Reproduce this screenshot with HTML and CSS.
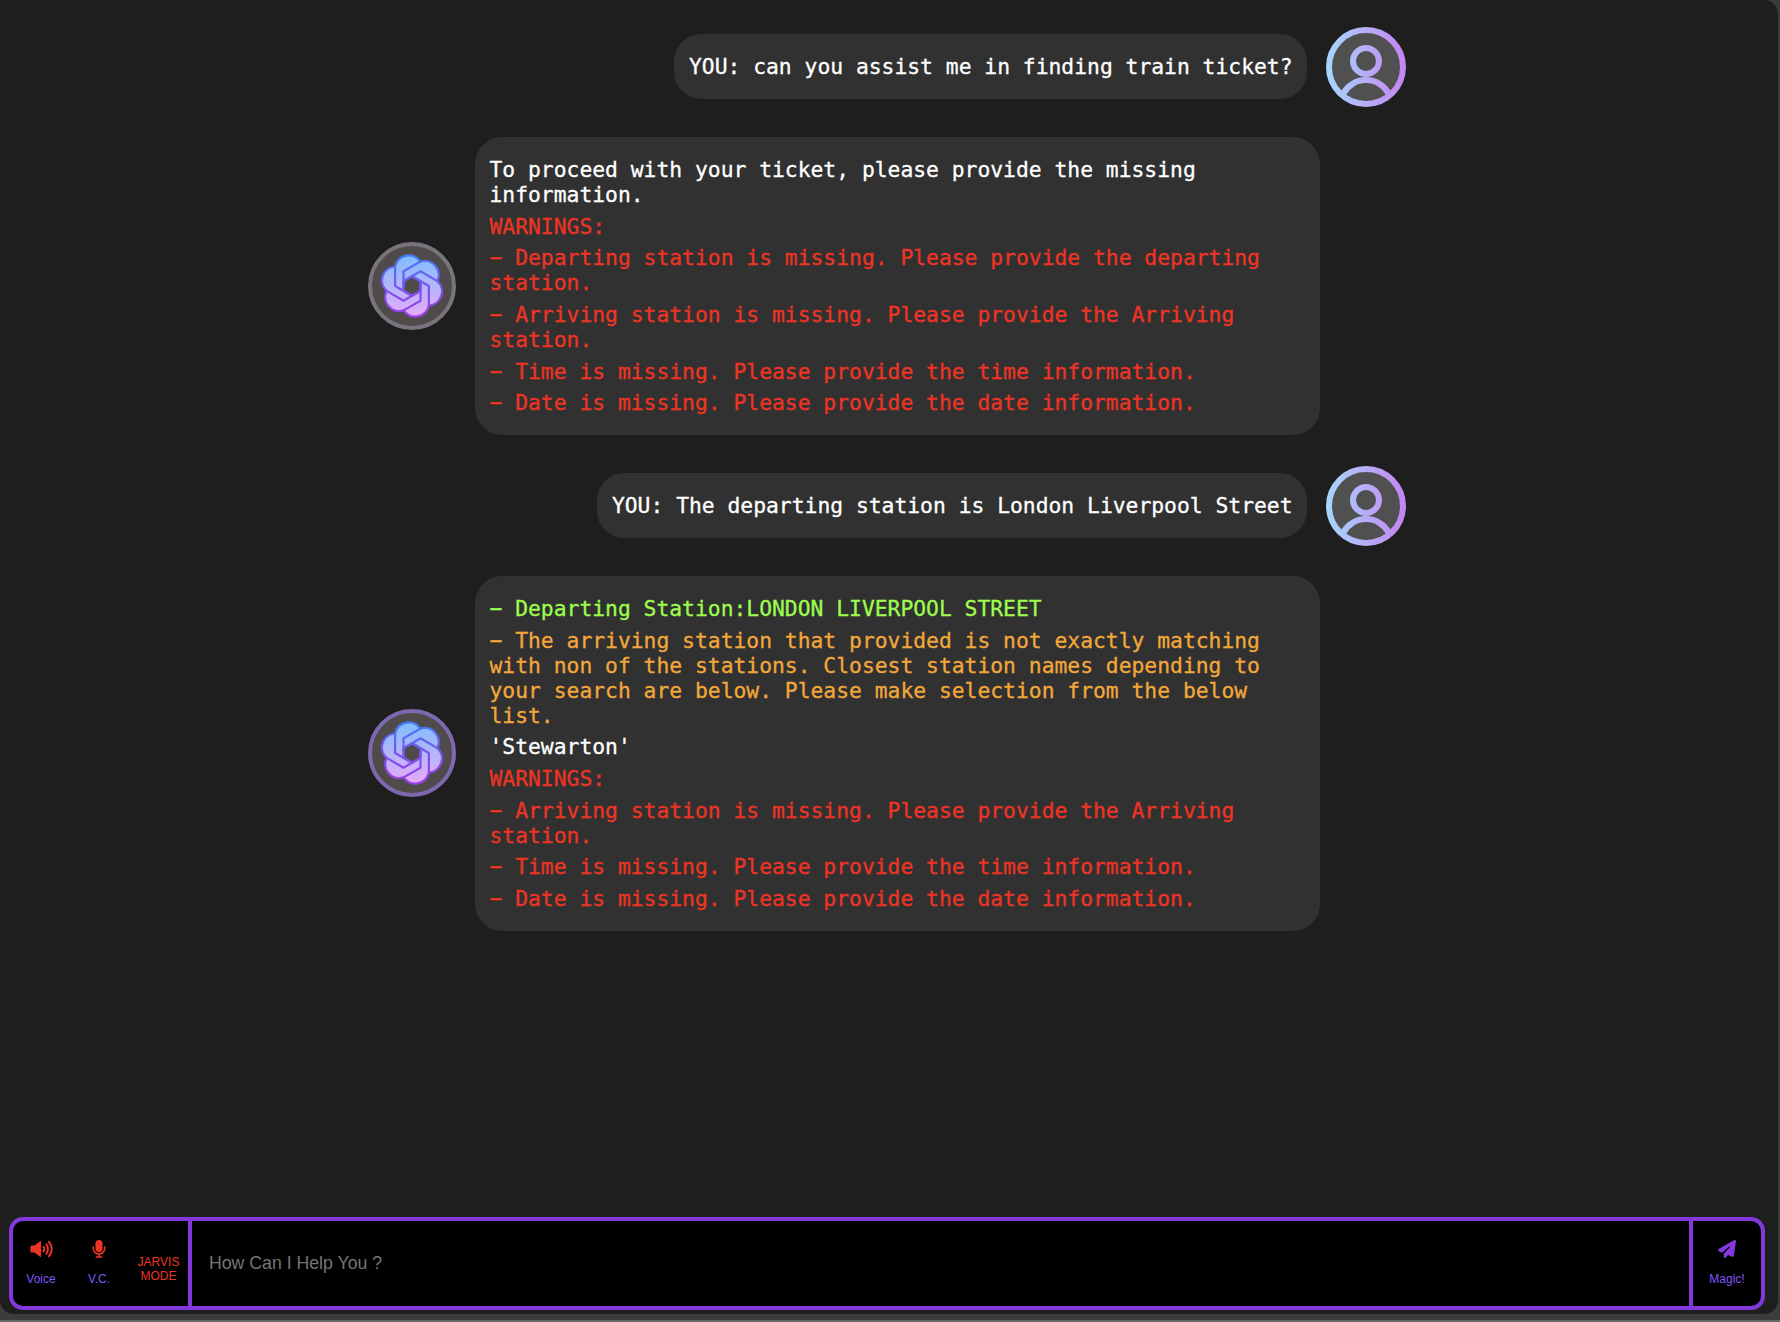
FILE: index.html
```
<!DOCTYPE html>
<html lang="en">
<head>
<meta charset="utf-8">
<title>Chat</title>
<link rel="stylesheet" href="styles.css">
</head>
<body>
<svg class="defs" aria-hidden="true">
  <defs>
    <linearGradient id="userStroke" x1="0" y1="0" x2="80" y2="0" gradientUnits="userSpaceOnUse">
      <stop offset="0" stop-color="#a6d8fb"/><stop offset="1" stop-color="#c583f2"/>
    </linearGradient>
    <linearGradient id="botFill" x1="0" y1="-30" x2="0" y2="30" gradientUnits="userSpaceOnUse">
      <stop offset="0" stop-color="#80bdff"/><stop offset=".5" stop-color="#b3b6f9"/><stop offset="1" stop-color="#e6aafa"/>
    </linearGradient>
    <linearGradient id="botStroke" x1="0" y1="-30" x2="0" y2="30" gradientUnits="userSpaceOnUse">
      <stop offset="0" stop-color="#4478f5"/><stop offset=".5" stop-color="#7a55ee"/><stop offset="1" stop-color="#9a3de8"/>
    </linearGradient>
    <symbol id="user" viewBox="0 0 80 80">
      <circle cx="40" cy="40" r="37" fill="#505050"/>
      <g fill="none" stroke="url(#userStroke)" stroke-width="6">
        <circle cx="40" cy="40" r="37"/>
        <circle cx="40" cy="34" r="13"/>
        <path d="M17 67A26 26 0 0 1 63 67"/>
      </g>
    </symbol>
    <symbol id="bot" viewBox="-34 -34 68 68">
      <g fill="none" stroke="url(#botStroke)" stroke-width="2.200" stroke-linejoin="round">
        <path fill="url(#botFill)" d="M-16.900-19.500A14 14 0 0 1 8.400-24.400A14 14 0 0 1 25.300-4.900A14 14 0 0 1 16.900 19.500A14 14 0 0 1-8.400 24.400A14 14 0 0 1-25.300 4.900A14 14 0 0 1-16.900-19.500Z"/>
        <path fill="#504b4b" d="M0-9.800L8.500-4.900V4.900L0 9.800L-8.500 4.900V-4.900Z"/>
        <path d="M-16.900-19.500V0L0 9.800M8.400-24.400L-8.500-14.700V4.900M25.300-4.900L8.500-14.700L-8.500-4.900M16.900 19.500V0L0-9.800M-8.400 24.400L8.500 14.700V-4.900M-25.300 4.900L-8.500 14.700L8.500 4.900"/>
      </g>
    </symbol>
  </defs>
</svg>
<div class="panel">
  <main class="chat">
    <section class="row user">
      <div class="bubble"><p>YOU: can you assist me in finding train ticket?</p></div>
      <svg class="user-avatar"><use href="#user"/></svg>
    </section>
    <section class="row">
      <div class="bot-avatar"><svg class="logo"><use href="#bot"/></svg></div>
      <div class="bubble">
        <p>To proceed with your ticket, please provide the missing information.</p>
        <p class="warn">WARNINGS:</p>
        <p class="warn">− Departing station is missing. Please provide the departing station.</p>
        <p class="warn">− Arriving station is missing. Please provide the Arriving station.</p>
        <p class="warn">− Time is missing. Please provide the time information.</p>
        <p class="warn">− Date is missing. Please provide the date information.</p>
      </div>
    </section>
    <section class="row user">
      <div class="bubble"><p>YOU: The departing station is London Liverpool Street</p></div>
      <svg class="user-avatar"><use href="#user"/></svg>
    </section>
    <section class="row">
      <div class="bot-avatar active"><svg class="logo"><use href="#bot"/></svg></div>
      <div class="bubble">
        <p class="ok">− Departing Station:LONDON LIVERPOOL STREET</p>
        <p class="hint">− The arriving station that provided is not exactly matching with non of the stations. Closest station names depending to your search are below. Please make selection from the below list.</p>
        <p>'Stewarton'</p>
        <p class="warn">WARNINGS:</p>
        <p class="warn">− Arriving station is missing. Please provide the Arriving station.</p>
        <p class="warn">− Time is missing. Please provide the time information.</p>
        <p class="warn">− Date is missing. Please provide the date information.</p>
      </div>
    </section>
  </main>
  <footer class="bar">
    <div class="tools">
      <button class="tool voice"><svg viewBox="0 0 24 18"><path fill="#ee3424" d="M2.500 5.500H5.500L11 1.200Q12 .600 12 2V16Q12 17.400 11 16.800L5.500 12.500H2.500Q1.500 12.500 1.500 11.500V6.500Q1.500 5.500 2.500 5.500Z"/><path fill="none" stroke="#ee3424" stroke-width="1.900" stroke-linecap="round" d="M14.500 6.800Q16.200 9 14.500 11.200M17.300 4.300Q20.600 9 17.300 13.700M20 1.800Q25.500 9 20 16.200"/></svg><span>Voice</span></button>
      <button class="tool mic"><svg viewBox="0 0 14 18"><rect x="3.500" y="0" width="7" height="12" rx="3.500" fill="#ee3424"/><path fill="none" stroke="#ee3424" stroke-width="1.600" stroke-linecap="round" d="M1.300 7V8.500A5.700 5.500 0 0 0 12.700 8.500V7M7 14V16.800M4.300 17H9.700"/></svg><span>V.C.</span></button>
      <button class="tool jarvis"><span>JARVIS<br>MODE</span></button>
    </div>
    <input class="prompt" type="text" placeholder="How Can I Help You ?">
    <button class="tool send"><svg viewBox="0 0 512 512"><path fill="#8338dc" d="M498 6c11 8 16 19 14 33l-64 416c-2 10-7 18-16 23s-18 5-27 1l-120-50-69 75c-9 10-20 12-33 8-13-5-19-15-19-30v-84c0-4 1-8 4-11L336 204c6-6 6-12 0-18s-12-6-18 0L115 366 27 322C10 313 0 302 0 289s6-23 17-30L465 3c12-6 23-5 33 3z"/></svg><span>Magic!</span></button>
  </footer>
</div>
</body>
</html>
```
FILE: styles.css
```
* { box-sizing: border-box; }
html { background: #666; }
body {
  margin: 0;
  height: 1322px;
  overflow: hidden;
  background: #3c3c3c;
  border-bottom: 2px solid #666;
  font-family: "Liberation Sans", Arial, sans-serif;
}
.defs { position: absolute; width: 0; height: 0; }
.panel {
  width: 1778px;
  height: 1314px;
  padding: 27px 13px 4px 9px;
  display: flex;
  flex-direction: column;
  justify-content: space-between;
  background: #1e1e1e;
  border-radius: 0 14px 14px 14px;
}
.chat {
  width: 1038px;
  margin-left: 359px;
  display: flex;
  flex-direction: column;
  gap: 30px;
}
.row { display: flex; align-items: center; gap: 19px; }
.row.user { justify-content: flex-end; height: 80px; }
.row + .row.user { margin-top: 0.700px; }
.row.user .bubble { margin-bottom: 1px; }
.user-avatar { width: 80px; height: 80px; flex: none; }
.bot-avatar {
  width: 88px;
  height: 88px;
  flex: none;
  display: grid;
  place-items: center;
  border: 4px solid #78737d;
  border-radius: 50%;
  background: #504b4b;
}
.bot-avatar.active { border-color: #7d69b0; }
.logo { width: 68px; height: 68px; }
.bubble {
  max-width: 845px;
  padding: 20px 14.500px;
  display: flex;
  flex-direction: column;
  gap: 6.660px;
  border-radius: 27px;
  background: #313131;
  color: #fff;
  font: 21.330px/25px "DejaVu Sans Mono", monospace;
  -webkit-text-stroke: 0.300px currentColor;
}
.bubble p { margin: 0; }
.bubble .warn { color: #ee3424; }
.bubble .ok { color: #9dfc4d; }
.bubble .hint { color: #f2a73b; }
.bar {
  width: 1756px;
  height: 93px;
  display: flex;
  border: 4px solid #8338dc;
  border-radius: 14px;
  background: #000;
  overflow: hidden;
}
.tools { width: 175px; display: flex; flex: none; }
.tool {
  padding: 0;
  border: 0;
  background: none;
  display: flex;
  flex-direction: column;
  align-items: center;
  font: 12px/14px "Liberation Sans", Arial, sans-serif;
  color: #8155f5;
}
.tool svg { height: 18px; margin: 19px 0 14px; flex: none; }
.voice { width: 56px; }
.voice svg { width: 24px; }
.mic { width: 60px; }
.mic svg { width: 14px; }
.jarvis { width: 59px; padding-top: 34px; color: #ee3424; text-align: center; }
.prompt {
  flex: 1;
  min-width: 0;
  padding: 0 17px;
  border: solid #8338dc;
  border-width: 0 4px;
  outline: 0;
  background: #000;
  font: 17.700px "Liberation Sans", Arial, sans-serif;
}
.prompt::placeholder { color: #757575; }
.send { width: 68px; flex: none; }
.send svg { width: 18px; }
```
